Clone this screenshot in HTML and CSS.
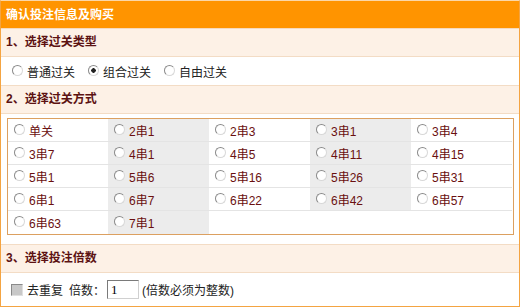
FILE: index.html
```html
<!DOCTYPE html>
<html lang="zh-CN">
  <head>
    <meta charset="UTF-8" />
    <title>确认投注信息及购买</title>
    <link rel="stylesheet" href="styles.css">
  </head>
  <body>
    <section class="caja">
      <h1 class="cabecera">确认投注信息及购买</h1>

      <h2 class="banda">1、选择过关类型</h2>
      <div class="fila">
        <label class="opcion"><input type="radio" name="tipo"> 普通过关</label>
        <label class="opcion"><input type="radio" name="tipo" checked> 组合过关</label>
        <label class="opcion"><input type="radio" name="tipo"> 自由过关</label>
      </div>

      <h2 class="banda">2、选择过关方式</h2>
      <div class="zona">
        <div class="rejilla">
          <label class="celda"><input type="radio" name="modo"> 单关</label>
          <label class="celda gris"><input type="radio" name="modo"> 2串1</label>
          <label class="celda"><input type="radio" name="modo"> 2串3</label>
          <label class="celda gris"><input type="radio" name="modo"> 3串1</label>
          <label class="celda"><input type="radio" name="modo"> 3串4</label>

          <label class="celda"><input type="radio" name="modo"> 3串7</label>
          <label class="celda gris"><input type="radio" name="modo"> 4串1</label>
          <label class="celda"><input type="radio" name="modo"> 4串5</label>
          <label class="celda gris"><input type="radio" name="modo"> 4串11</label>
          <label class="celda"><input type="radio" name="modo"> 4串15</label>

          <label class="celda"><input type="radio" name="modo"> 5串1</label>
          <label class="celda gris"><input type="radio" name="modo"> 5串6</label>
          <label class="celda"><input type="radio" name="modo"> 5串16</label>
          <label class="celda gris"><input type="radio" name="modo"> 5串26</label>
          <label class="celda"><input type="radio" name="modo"> 5串31</label>

          <label class="celda"><input type="radio" name="modo"> 6串1</label>
          <label class="celda gris"><input type="radio" name="modo"> 6串7</label>
          <label class="celda"><input type="radio" name="modo"> 6串22</label>
          <label class="celda gris"><input type="radio" name="modo"> 6串42</label>
          <label class="celda"><input type="radio" name="modo"> 6串57</label>

          <label class="celda ultima"><input type="radio" name="modo"> 6串63</label>
          <label class="celda gris ultima"><input type="radio" name="modo"> 7串1</label>
          <div class="celda ultima vacia"></div>
        </div>
      </div>

      <h2 class="banda">3、选择投注倍数</h2>
      <div class="fila pie">
        <label class="marca"><input type="checkbox"> 去重复</label>
        <span class="etiqueta">倍数：</span>
        <input class="veces" type="text" value="1">
        <span class="nota">(倍数必须为整数)</span>
      </div>
    </section>
  </body>
</html>
```

FILE: styles.css
```css
* {
  margin: 0;
  padding: 0;
  box-sizing: border-box;
  font-family: "Liberation Sans", "Noto Sans CJK SC", sans-serif;
  font-size: 12px;
}

body {
  background-color: #fff;
}

.caja {
  width: 520px;
  border: 1px solid #f4a442;
  border-top-color: #fbd7a8;
  background-color: #fff;
}

.cabecera {
  height: 28px;
  line-height: 28px;
  padding-left: 5px;
  background-color: #ff9400;
  color: #fff;
  font-weight: bold;
  border-bottom: 1px solid #f6d9bd;
}

.banda {
  height: 28px;
  line-height: 27px;
  padding-left: 5px;
  background-color: #fdf1e6;
  color: #5c1212;
  font-weight: bold;
  border-bottom: 1px solid #f3dcc5;
}

.fila {
  height: 29px;
  display: flex;
  align-items: center;
  padding-left: 11px;
  border-bottom: 1px solid #f3dcc5;
  color: #222;
}

.opcion {
  display: flex;
  align-items: center;
  margin-right: 13px;
}

input[type="radio"] {
  appearance: none;
  width: 11px;
  height: 11px;
  border-radius: 50%;
  border: 1px solid #8a8a8a;
  border-right-color: #d8d8d8;
  border-bottom-color: #d8d8d8;
  background-color: #fff;
  margin-right: 4px;
  position: relative;
  top: -1px;
}

input[type="radio"]:checked {
  background: radial-gradient(circle, #222 0 2px, #fff 2.5px);
}

.zona {
  padding: 4px 6px 9px 6px;
  border-bottom: 1px solid #f3dcc5;
}

.rejilla {
  display: grid;
  grid-template-columns: 100px 101px 101px 101px 101px;
  border: 1px solid #dca060;
  width: 507px;
}

.celda {
  height: 23px;
  display: flex;
  align-items: center;
  padding-left: 6px;
  color: #6a1010;
  border-bottom: 1px solid #e4e4e4;
}

.celda.ultima {
  border-bottom: none;
}

.celda.vacia {
  grid-column: 3 / 6;
}

.gris {
  background-color: #ececec;
}

.pie {
  height: 33px;
  border-bottom: none;
  padding-left: 10px;
}

.marca {
  display: flex;
  align-items: center;
  margin-right: 6px;
}

input[type="checkbox"] {
  appearance: none;
  width: 12px;
  height: 12px;
  border: 1px solid #8a8a8a;
  border-right-color: #e0e0e0;
  border-bottom-color: #e0e0e0;
  background-color: #c8c8c8;
  margin-right: 4px;
}

.etiqueta {
  margin-right: 2px;
  font-family: "Noto Sans CJK SC", sans-serif;
}

.veces {
  width: 32px;
  height: 19px;
  border: 1px solid #7a7a7a;
  border-right-color: #d0d0d0;
  border-bottom-color: #d0d0d0;
  padding-left: 3px;
  margin-right: 3px;
  font-family: "Liberation Serif", serif;
  font-size: 13px;
}
```
